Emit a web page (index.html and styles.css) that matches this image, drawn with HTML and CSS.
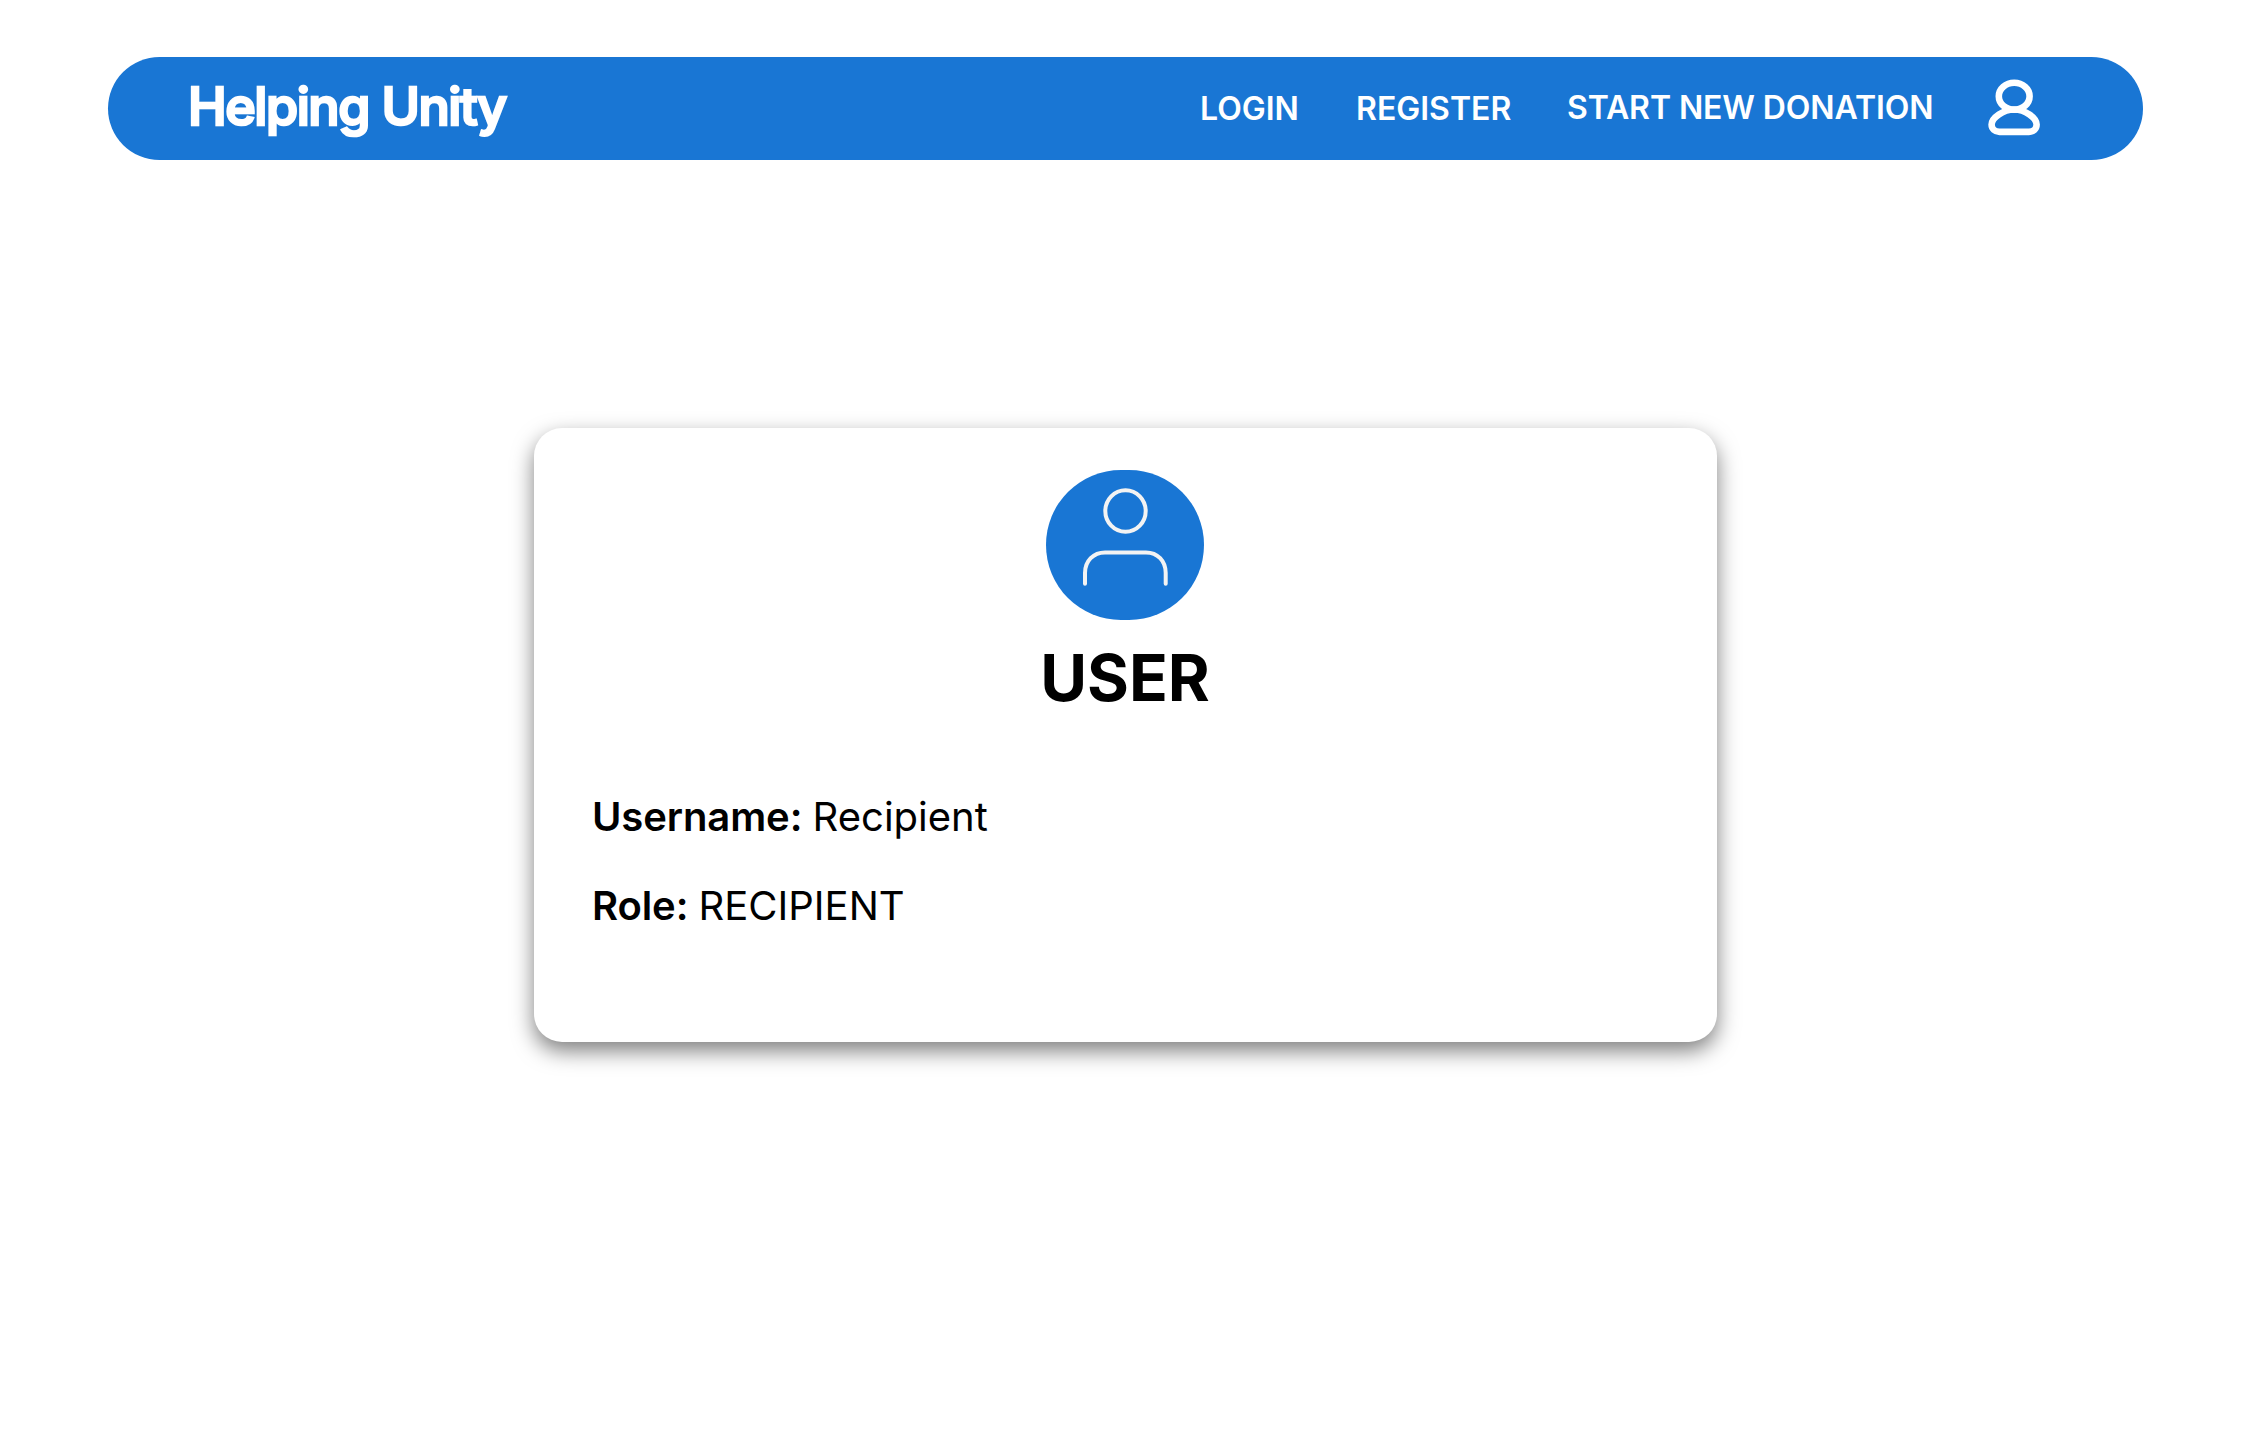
FILE: index.html
```html
<!DOCTYPE html>
<html lang="en">
<head>
<meta charset="utf-8">
<title>Helping Unity</title>
<link rel="stylesheet" href="styles.css">
</head>
<body>
<header class="navbar">
  <a class="brand">Helping Unity</a>
  <nav class="links">
    <a class="link login">LOGIN</a>
    <a class="link register">REGISTER</a>
    <a class="link donate">START NEW DONATION</a>
    <svg class="account" viewBox="0 0 54 58" fill="none" stroke="#fff" stroke-width="6.6">
      <ellipse cx="27.2" cy="18.3" rx="15.4" ry="13.5"/>
      <path d="M27.2 31.5C16.5 31.5 4.6 39.8 4.6 46.6C4.6 50.9 8 53.9 12.5 53.9H41.9C46.4 53.9 49.6 50.9 49.6 46.6C49.6 39.8 37.9 31.5 27.2 31.5Z"/>
    </svg>
  </nav>
</header>
<main class="card">
  <div class="avatar">
    <svg class="person" viewBox="0 0 90 104" fill="none" stroke="#f3f3f3" stroke-width="4" stroke-linecap="round">
      <ellipse cx="45.5" cy="25" rx="20.2" ry="20.8"/>
      <path d="M5 97.700V87C5 75 13.500 66.400 25 66.400H66C77.500 66.400 85.700 75 85.700 87V97.700"/>
    </svg>
  </div>
  <h1 class="title">USER</h1>
  <p class="row"><b class="label">Username:</b> Recipient</p>
  <p class="row"><b class="label">Role:</b> RECIPIENT</p>
</main>
</body>
</html>
```
FILE: styles.css
```css
* { box-sizing: border-box; }
body {
  margin: 0;
  min-height: 1431px;
  padding-top: 57px;
  background: #fff;
  color: #000;
  font-family: Inter, "Liberation Sans", sans-serif;
}
.navbar {
  display: flex;
  align-items: center;
  justify-content: space-between;
  width: 2035px;
  height: 103px;
  margin-left: 108px;
  padding: 0 102px 0 80px;
  border-radius: 52px;
  background: #1976d4;
  color: #fff;
}
.brand {
  padding-bottom: 4px;
  font-size: 52px;
  font-weight: 500;
  line-height: 64px;
  letter-spacing: -1.45px;
  -webkit-text-stroke: 2.6px #fff;
}
.links { display: flex; align-items: center; }
.link {
  font-size: 32px;
  font-weight: 560;
  line-height: 40px;
  white-space: nowrap;
}
.login { width: 156px; }
.register { width: 211px; }
.donate { width: 420px; padding-bottom: 2px; letter-spacing: -.1px; }
.account { width: 54px; height: 58px; margin-bottom: 4px; }
.card {
  width: 1183px;
  height: 614px;
  margin: 268px 0 0 534px;
  padding: 42px 59px 0 58px;
  border-radius: 28px;
  background: #fff;
  box-shadow: 0 9px 21px rgba(0, 0, 0, .5);
}
.avatar {
  display: flex;
  justify-content: center;
  width: 158px;
  height: 150px;
  margin: 0 auto;
  padding-top: 16px;
  border-radius: 75px;
  background: #1976d4;
}
.person { width: 90px; height: 104px; }
.title {
  margin: 19px 0 76px;
  font-size: 64px;
  font-weight: 700;
  line-height: 78px;
  text-align: center;
}
.row {
  margin: 0 0 41px;
  font-size: 40px;
  font-weight: 380;
  line-height: 48px;
}
.label {
  margin-right: -1px;
  font-weight: 600;
  letter-spacing: -.1px;
}
```
